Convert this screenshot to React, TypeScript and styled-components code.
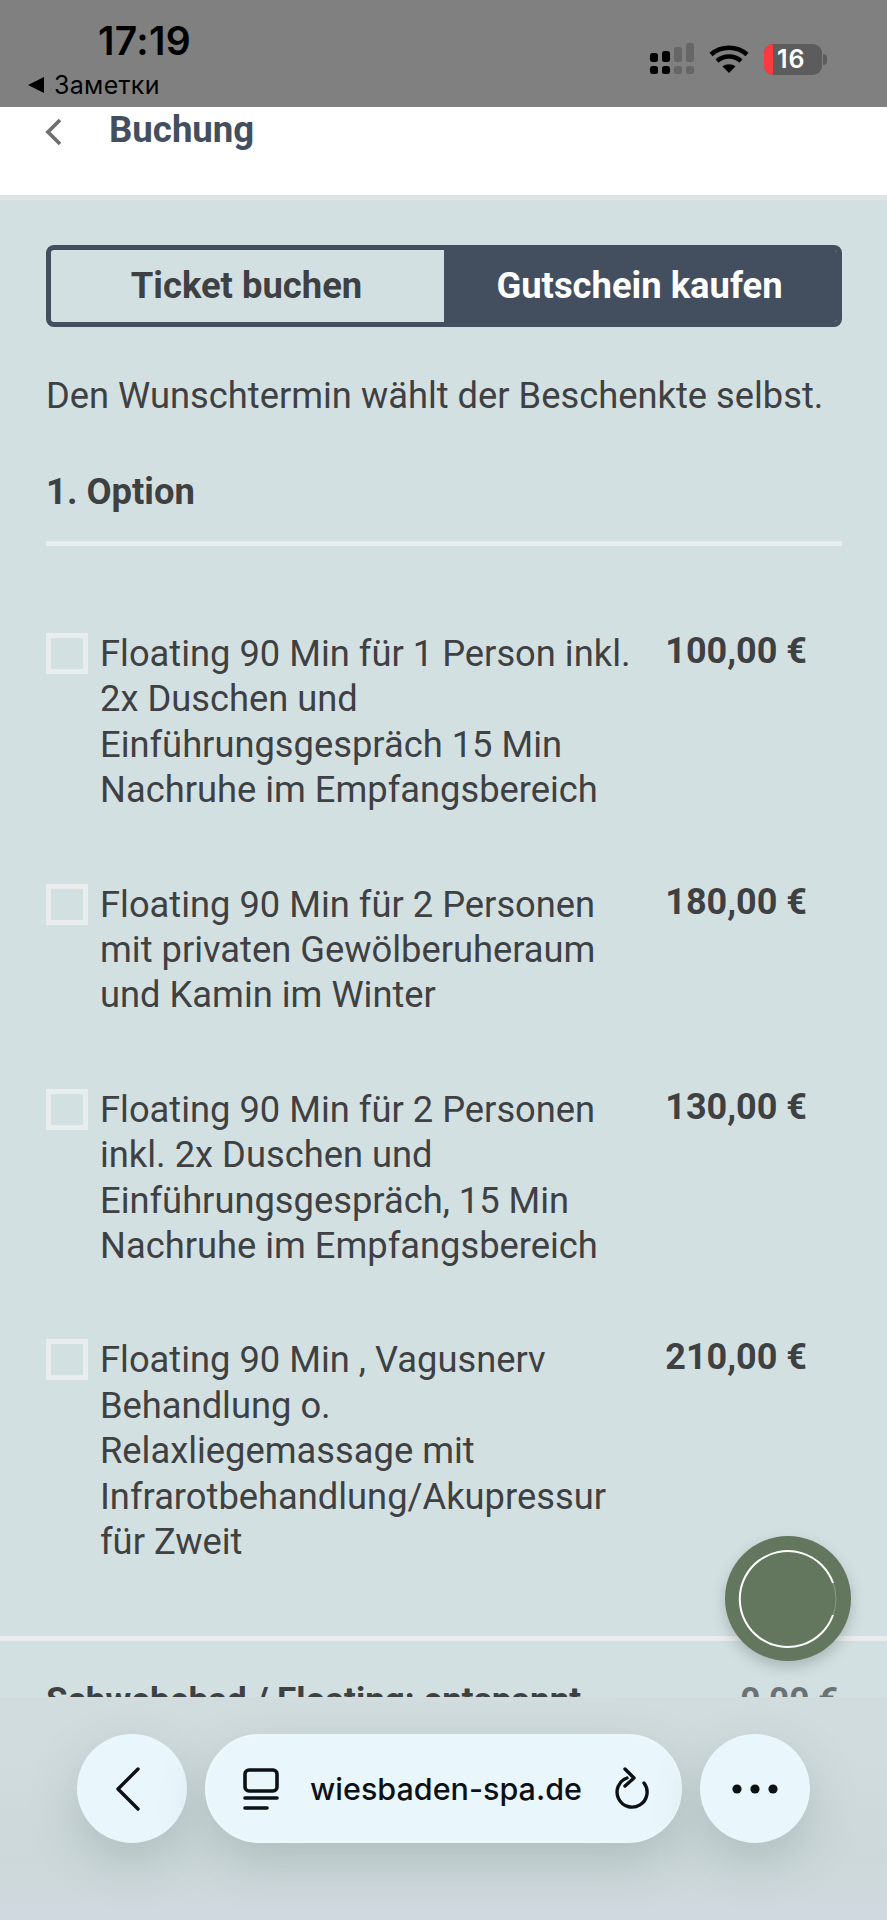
import React from "react";
import styled, { createGlobalStyle } from "styled-components";

const colors = {
    page: "#d3e0e2",
    slate: "#434e5f",
    text: "#3f4042",
    line: "#e9eded",
    chrome: "#e9f6fb",
    green: "#62775d",
};

const GlobalStyle = createGlobalStyle`
    html, body {
        margin: 0;
        padding: 0;
        background: ${colors.page};
    }
    * {
        box-sizing: border-box;
    }
`;

const Screen = styled.div`
    position: relative;
    width: 887px;
    height: 1920px;
    overflow: hidden;
    background: ${colors.page};
    font-family: Roboto, "Liberation Sans", sans-serif;
    color: ${colors.text};
`;

const StatusBar = styled.div`
    height: 107px;
    background: #808080;
    display: flex;
    justify-content: space-between;
    padding: 0 60px 0 28px;
    color: #000;
    font-family: Inter, "Liberation Sans", sans-serif;
`;

const StatusLeft = styled.div`
    display: flex;
    flex-direction: column;
`;

const Clock = styled.div`
    font-size: 39px;
    font-weight: 600;
    line-height: 44px;
    margin: 19px 0 0 70px;
    letter-spacing: 0.3px;
`;

const BackApp = styled.div`
    font-size: 25px;
    line-height: 28px;
    margin-top: 8px;
    display: flex;
    align-items: center;
    gap: 10px;
    letter-spacing: 0.3px;
`;

const BackTriangle = styled.span`
    width: 0;
    height: 0;
    border-style: solid;
    border-width: 8px 16px 8px 0;
    border-color: transparent #000 transparent transparent;
`;

const StatusRight = styled.div`
    display: flex;
    align-items: center;
    height: 32px;
    margin-top: 43px;
    gap: 15px;
`;

const Battery = styled.div`
    position: relative;
    width: 58px;
    height: 31px;
    border-radius: 9px;
    background: #5c5c5c;
    overflow: hidden;
    color: #fff;
    font-size: 25px;
    font-weight: 600;
    line-height: 31px;
    padding-left: 13px;
    letter-spacing: 1px;
`;

const BatteryLevel = styled.span`
    position: absolute;
    left: 0;
    top: 0;
    bottom: 0;
    width: 9px;
    background: #fb3a40;
`;

const BatteryTip = styled.span`
    width: 4px;
    height: 11px;
    margin-left: -14px;
    background: #5c5c5c;
    border-radius: 0 4px 4px 0;
`;

const Header = styled.header`
    height: 93px;
    background: #fff;
    border-bottom: 5px solid #dfe3e3;
    display: flex;
    align-items: flex-start;
    padding: 4px 0 0 45px;
    gap: 46px;
`;

const HeaderChevron = styled.svg`
    margin-top: 7px;
`;

const HeaderTitle = styled.h1`
    margin: 0;
    font-size: 36.6px;
    line-height: 38px;
    font-weight: 700;
    color: ${colors.slate};
`;

const Content = styled.main`
    padding: 45px 45px 0 46px;
`;

const Toggle = styled.div`
    display: grid;
    grid-template-columns: 393px 1fr;
    height: 82px;
    border-radius: 8px;
    border: 5px solid ${colors.slate};
    overflow: hidden;
`;

const ToggleOption = styled.div<{ $active?: boolean }>`
    display: flex;
    align-items: center;
    justify-content: center;
    font-size: 36.4px;
    font-weight: 700;
    padding: 0 2px 2px 0;
    background: ${(p) => (p.$active ? colors.slate : "transparent")};
    color: ${(p) => (p.$active ? "#fff" : colors.text)};
`;

const Intro = styled.p`
    margin: 46px 0 0;
    font-size: 36.3px;
    line-height: 46px;
    white-space: nowrap;
`;

const SectionTitle = styled.h2`
    margin: 50px 0 0;
    font-size: 36.4px;
    line-height: 46px;
    font-weight: 700;
`;

const Divider = styled.div`
    height: 5px;
    margin-top: 26px;
    background: ${colors.line};
`;

const OptionList = styled.div`
    margin-top: 85px;
    display: flex;
    flex-direction: column;
    gap: 69px;
`;

const OptionRow = styled.div`
    display: grid;
    grid-template-columns: 54px 1fr 160px;
    padding-right: 35px;
`;

const Check = styled.span`
    width: 42px;
    height: 41px;
    margin-top: 2px;
    border: 5px solid ${colors.line};
`;

const OptionText = styled.div`
    font-size: 36.3px;
    line-height: 45.4px;
    white-space: pre-line;
`;

const Price = styled.div`
    font-size: 36px;
    line-height: 40px;
    font-weight: 700;
    white-space: nowrap;
    text-align: right;
`;

const FullDivider = styled.div`
    height: 5px;
    margin-top: 71px;
    background: ${colors.line};
`;

const NextRow = styled.div`
    display: flex;
    justify-content: space-between;
    padding: 37px 49px 0 46px;
    font-size: 35px;
    line-height: 46px;
    font-weight: 700;
`;

const NextPrice = styled.span`
    color: #6c7274;
`;

const Fab = styled.div`
    position: absolute;
    left: 725px;
    top: 1536px;
    width: 126px;
    height: 125px;
    border-radius: 50%;
    background: ${colors.green};
    box-shadow: 0 6px 14px rgba(60, 75, 75, 0.28);
    display: flex;
    align-items: center;
    justify-content: center;
`;

const BrowserBar = styled.div`
    position: absolute;
    left: 0;
    right: 0;
    top: 1697px;
    height: 223px;
    padding: 37px 77px 0;
    display: flex;
    align-items: flex-start;
    gap: 18px;
    background: linear-gradient(180deg, #d1dcde 0%, #d0dbdd 35%, #ccd8d9 70%, #d0d9df 100%);
`;

const RoundButton = styled.div`
    width: 110px;
    height: 109px;
    flex: none;
    border-radius: 50%;
    background: ${colors.chrome};
    display: flex;
    align-items: center;
    justify-content: center;
    box-shadow: 0 18px 48px rgba(110, 130, 130, 0.3);
`;

const BackChevron = styled.svg`
    margin-right: 8px;
`;

const AddressPill = styled.div`
    width: 477px;
    height: 109px;
    flex: none;
    border-radius: 55px;
    background: ${colors.chrome};
    border: 2px solid #eef7fa;
    display: flex;
    align-items: center;
    padding: 0 30px 0 36px;
    box-shadow: 0 18px 48px rgba(110, 130, 130, 0.3);
`;

const Address = styled.span`
    flex: 1;
    margin-left: 31px;
    font-family: Inter, "Liberation Sans", sans-serif;
    font-size: 30.5px;
    font-weight: 500;
    color: #0d1114;
    white-space: nowrap;
`;

const options = [
    {
        text: "Floating 90 Min für 1 Person inkl.\n2x Duschen und\nEinführungsgespräch 15 Min\nNachruhe im Empfangsbereich",
        price: "100,00 €",
    },
    {
        text: "Floating 90 Min für 2 Personen\nmit privaten Gewölberuheraum\nund Kamin im Winter",
        price: "180,00 €",
    },
    {
        text: "Floating 90 Min für 2 Personen\ninkl. 2x Duschen und\nEinführungsgespräch, 15 Min\nNachruhe im Empfangsbereich",
        price: "130,00 €",
    },
    {
        text: "Floating 90 Min , Vagusnerv\nBehandlung o.\nRelaxliegemassage mit\nInfrarotbehandlung/Akupressur\nfür Zweit",
        price: "210,00 €",
    },
];

const Signal = () => (
    <svg width="44" height="32" viewBox="0 0 44 32">
        <rect x="0" y="10" width="8" height="9" rx="2.5" fill="#000" />
        <rect x="0" y="23" width="8" height="8" rx="2.5" fill="#000" />
        <rect x="12" y="8" width="8" height="11" rx="2.5" fill="#000" />
        <rect x="12" y="23" width="8" height="8" rx="2.5" fill="#000" />
        <rect x="24" y="4" width="8" height="15" rx="2.5" fill="#666" />
        <rect x="24" y="23" width="8" height="8" rx="2.5" fill="#666" />
        <rect x="36" y="0" width="8" height="19" rx="2.5" fill="#666" />
        <rect x="36" y="23" width="8" height="8" rx="2.5" fill="#666" />
    </svg>
);

const Wifi = () => (
    <svg width="40" height="30" viewBox="0 0 40 30" fill="none" stroke="#000" strokeWidth="4.6">
        <path d="M2 10.5C12 1.5 28 1.5 38 10.5" />
        <path d="M8 17C15 11 25 11 32 17" />
        <path d="M20 29L13.5 22.5C17 19.5 23 19.5 26.5 22.5Z" fill="#000" stroke="none" />
    </svg>
);

const App: React.FC = () => {
    return (
        <Screen>
            <GlobalStyle />
            <StatusBar>
                <StatusLeft>
                    <Clock>17:19</Clock>
                    <BackApp>
                        <BackTriangle />
                        Заметки
                    </BackApp>
                </StatusLeft>
                <StatusRight>
                    <Signal />
                    <Wifi />
                    <Battery>
                        <BatteryLevel />
                        16
                    </Battery>
                    <BatteryTip />
                </StatusRight>
            </StatusBar>
            <Header>
                <HeaderChevron width="18" height="28" viewBox="0 0 18 28" fill="none" stroke="#707070" strokeWidth="3.8">
                    <path d="M15 2L3 14L15 26" />
                </HeaderChevron>
                <HeaderTitle>Buchung</HeaderTitle>
            </Header>
            <Content>
                <Toggle>
                    <ToggleOption>Ticket buchen</ToggleOption>
                    <ToggleOption $active>Gutschein kaufen</ToggleOption>
                </Toggle>
                <Intro>Den Wunschtermin wählt der Beschenkte selbst.</Intro>
                <SectionTitle>1. Option</SectionTitle>
                <Divider />
                <OptionList>
                    {options.map((option) => (
                        <OptionRow key={option.price}>
                            <Check />
                            <OptionText>{option.text}</OptionText>
                            <Price>{option.price}</Price>
                        </OptionRow>
                    ))}
                </OptionList>
            </Content>
            <FullDivider />
            <NextRow>
                <span>Schwebebad / Floating: entspannt</span>
                <NextPrice>0,00 €</NextPrice>
            </NextRow>
            <Fab>
                <svg width="100" height="100" viewBox="0 0 100 100" fill="none" stroke="#fff">
                    <circle cx="50" cy="50" r="48" strokeWidth="1" strokeOpacity="0.25" />
                    <path d="M95 34A48 48 0 1 0 95 66" strokeWidth="2" />
                </svg>
            </Fab>
            <BrowserBar>
                <RoundButton>
                    <BackChevron width="26" height="44" viewBox="0 0 26 44" fill="none" stroke="#0d1114" strokeWidth="3.4" strokeLinecap="round" strokeLinejoin="round">
                        <path d="M23 2L3 22L23 42" />
                    </BackChevron>
                </RoundButton>
                <AddressPill>
                    <svg width="36" height="42" viewBox="0 0 36 42" fill="none" stroke="#0d1114" strokeWidth="3.6" strokeLinecap="round">
                        <rect x="2" y="2" width="32" height="21" rx="4" />
                        <path d="M2 30H34" />
                        <path d="M2 40H24" />
                    </svg>
                    <Address>wiesbaden-spa.de</Address>
                    <svg width="36" height="44" viewBox="0 0 36 44" fill="none" stroke="#0d1114" strokeWidth="3.4" strokeLinecap="round" strokeLinejoin="round">
                        <path d="M13 11A15 15 0 1 0 30 16" />
                        <path d="M11 2L20 11L11 19" />
                    </svg>
                </AddressPill>
                <RoundButton>
                    <svg width="46" height="10" viewBox="0 0 46 10" fill="#0d1114">
                        <circle cx="5" cy="5" r="4.6" />
                        <circle cx="23" cy="5" r="4.6" />
                        <circle cx="41" cy="5" r="4.6" />
                    </svg>
                </RoundButton>
            </BrowserBar>
        </Screen>
    );
};

export default App;
